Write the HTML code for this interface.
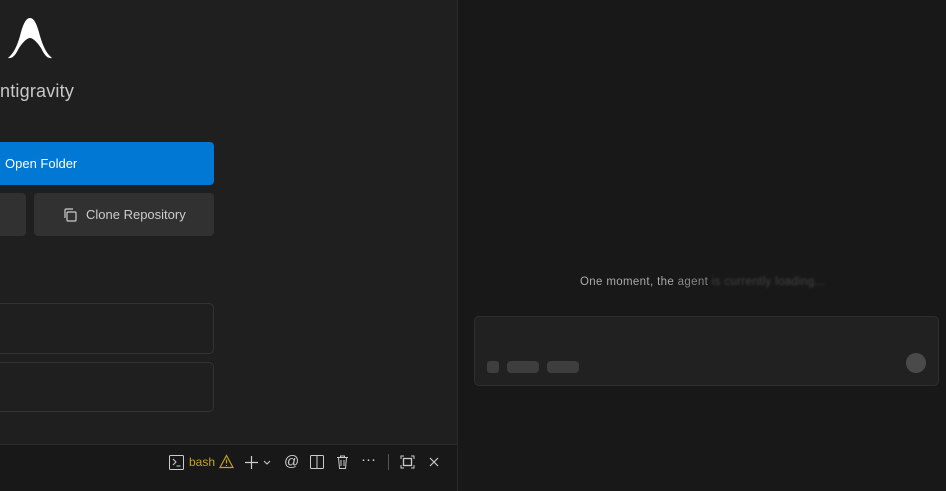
<!DOCTYPE html>
<html><head><style>
*{margin:0;padding:0;box-sizing:border-box}
body{width:946px;height:491px;overflow:hidden;background:#181818;font-family:"Liberation Sans",sans-serif;position:relative}
#left{position:absolute;left:0;top:0;width:457px;height:444px;background:#1f1f1f}
#div{position:absolute;left:457px;top:0;width:1px;height:491px;background:#2b2b2b}
#bottom{position:absolute;left:0;top:444px;width:457px;height:47px;background:#181818;border-top:1px solid #2b2b2b}
.btn{position:absolute;border-radius:4px;font-size:13px;color:#ccc;display:flex;align-items:center}
.box{position:absolute;left:-10px;width:224px;border:1px solid #333;border-radius:5px;background:#1f1f1f}
.ic{position:absolute;top:453px;color:#ccc;font-size:14px}
</style></head><body>
<div id="left">
<svg style="position:absolute;left:7px;top:16px" width="46" height="44" viewBox="0 0 46 44"><path d="M1 42 C7 37 10 30 13 20 C16 8 19 2 23 2 C27 2 30 8 33 20 C36 30 39 37 45 42 C40 43 37 38 34 32 C30 26 26 22 23 22 C20 22 16 26 12 32 C9 38 6 43 1 42Z" fill="#fff"/></svg>
<div style="position:absolute;left:0;top:81px;font-size:18px;color:#c8c8c8;letter-spacing:0.2px">ntigravity</div>
<div class="btn" style="left:-10px;top:142px;width:224px;height:43px;background:#0078d4;color:#fff;padding-left:15px">Open Folder</div>
<div class="btn" style="left:-10px;top:193px;width:36px;height:43px;background:#313131"></div>
<div class="btn" style="left:34px;top:193px;width:180px;height:43px;background:#313131;padding-left:28px">
<svg width="16" height="16" viewBox="0 0 16 16" style="margin-right:8px"><rect x="5" y="5" width="9" height="9" rx="1" fill="none" stroke="#ccc" stroke-width="1.2"/><path d="M3 11V3a1 1 0 0 1 1-1h7" fill="none" stroke="#ccc" stroke-width="1.2"/></svg>Clone Repository</div>
<div class="box" style="top:303px;height:51px"></div>
<div class="box" style="top:362px;height:50px"></div>
</div>
<div id="div"></div>
<div id="bottom"></div>
<svg class="ic" style="left:169px;top:455px" width="15" height="15" viewBox="0 0 15 15"><rect x="0.5" y="0.5" width="14" height="14" rx="1" fill="none" stroke="#ccc"/><path d="M4 4l3 3-3 3M7.5 11h4" fill="none" stroke="#ccc"/></svg>
<div class="ic" style="left:189px;top:455px;font-size:12px;color:#c5a21a">bash</div>
<svg class="ic" style="left:219px;top:454px" width="15" height="15" viewBox="0 0 15 15"><path d="M7.5 1.5L14 13.5H1Z" fill="none" stroke="#c5a21a" stroke-width="1.2"/><path d="M7.5 5.5v4M7.5 11v1" stroke="#c5a21a" stroke-width="1.2"/></svg>
<svg class="ic" style="left:244px;top:455px" width="30" height="15" viewBox="0 0 30 15"><path d="M7.5 1v13M1 7.5h13" stroke="#ccc" stroke-width="1.2"/><path d="M20 6l3 3 3-3" fill="none" stroke="#ccc"/></svg>
<div class="ic" style="left:284px;top:453px;font-size:15px">@</div>
<svg class="ic" style="left:310px;top:455px" width="14" height="14" viewBox="0 0 14 14"><rect x="0.5" y="0.5" width="13" height="13" rx="1" fill="none" stroke="#ccc"/><path d="M7 1v12" stroke="#ccc"/></svg>
<svg class="ic" style="left:336px;top:455px" width="13" height="14" viewBox="0 0 13 14"><path d="M1 2.5h11M4.5 2.5V1h4v1.5M2.5 2.5l1 11h6l1-11M5 5v6M8 5v6" fill="none" stroke="#ccc"/></svg>
<div class="ic" style="left:361px;top:451px;font-size:15px">···</div>
<div style="position:absolute;left:388px;top:454px;width:1px;height:16px;background:#555"></div>
<svg class="ic" style="left:400px;top:455px" width="15" height="14" viewBox="0 0 15 14"><path d="M1 4V1h3M11 1h3v3M14 10v3h-3M4 13H1v-3" fill="none" stroke="#ccc"/><rect x="3.5" y="3.5" width="8" height="7" fill="none" stroke="#ccc" stroke-width="1.3"/></svg>
<svg class="ic" style="left:429px;top:457px" width="10" height="10" viewBox="0 0 10 10"><path d="M1 1l8 8M9 1l-8 8" stroke="#ccc" stroke-width="1.2"/></svg>
<div style="position:absolute;left:580px;top:276px;font-size:11.5px;letter-spacing:0.35px;color:#aaa;white-space:nowrap">One moment, the <span style="color:#888">agent</span> <span style="color:#444;filter:blur(1px)">is currently loading...</span></div>
<div style="position:absolute;left:474px;top:316px;width:465px;height:70px;background:#212121;border:1px solid #2e2e2e;border-radius:5px">
<div style="position:absolute;left:12px;top:44px;width:12px;height:12px;border-radius:3px;background:#3e3e3e"></div>
<div style="position:absolute;left:32px;top:44px;width:32px;height:12px;border-radius:4px;background:#3e3e3e"></div>
<div style="position:absolute;left:72px;top:44px;width:32px;height:12px;border-radius:4px;background:#3e3e3e"></div>
<div style="position:absolute;left:431px;top:36px;width:20px;height:20px;border-radius:50%;background:#4a4a4a"></div>
</div>
</body></html>
